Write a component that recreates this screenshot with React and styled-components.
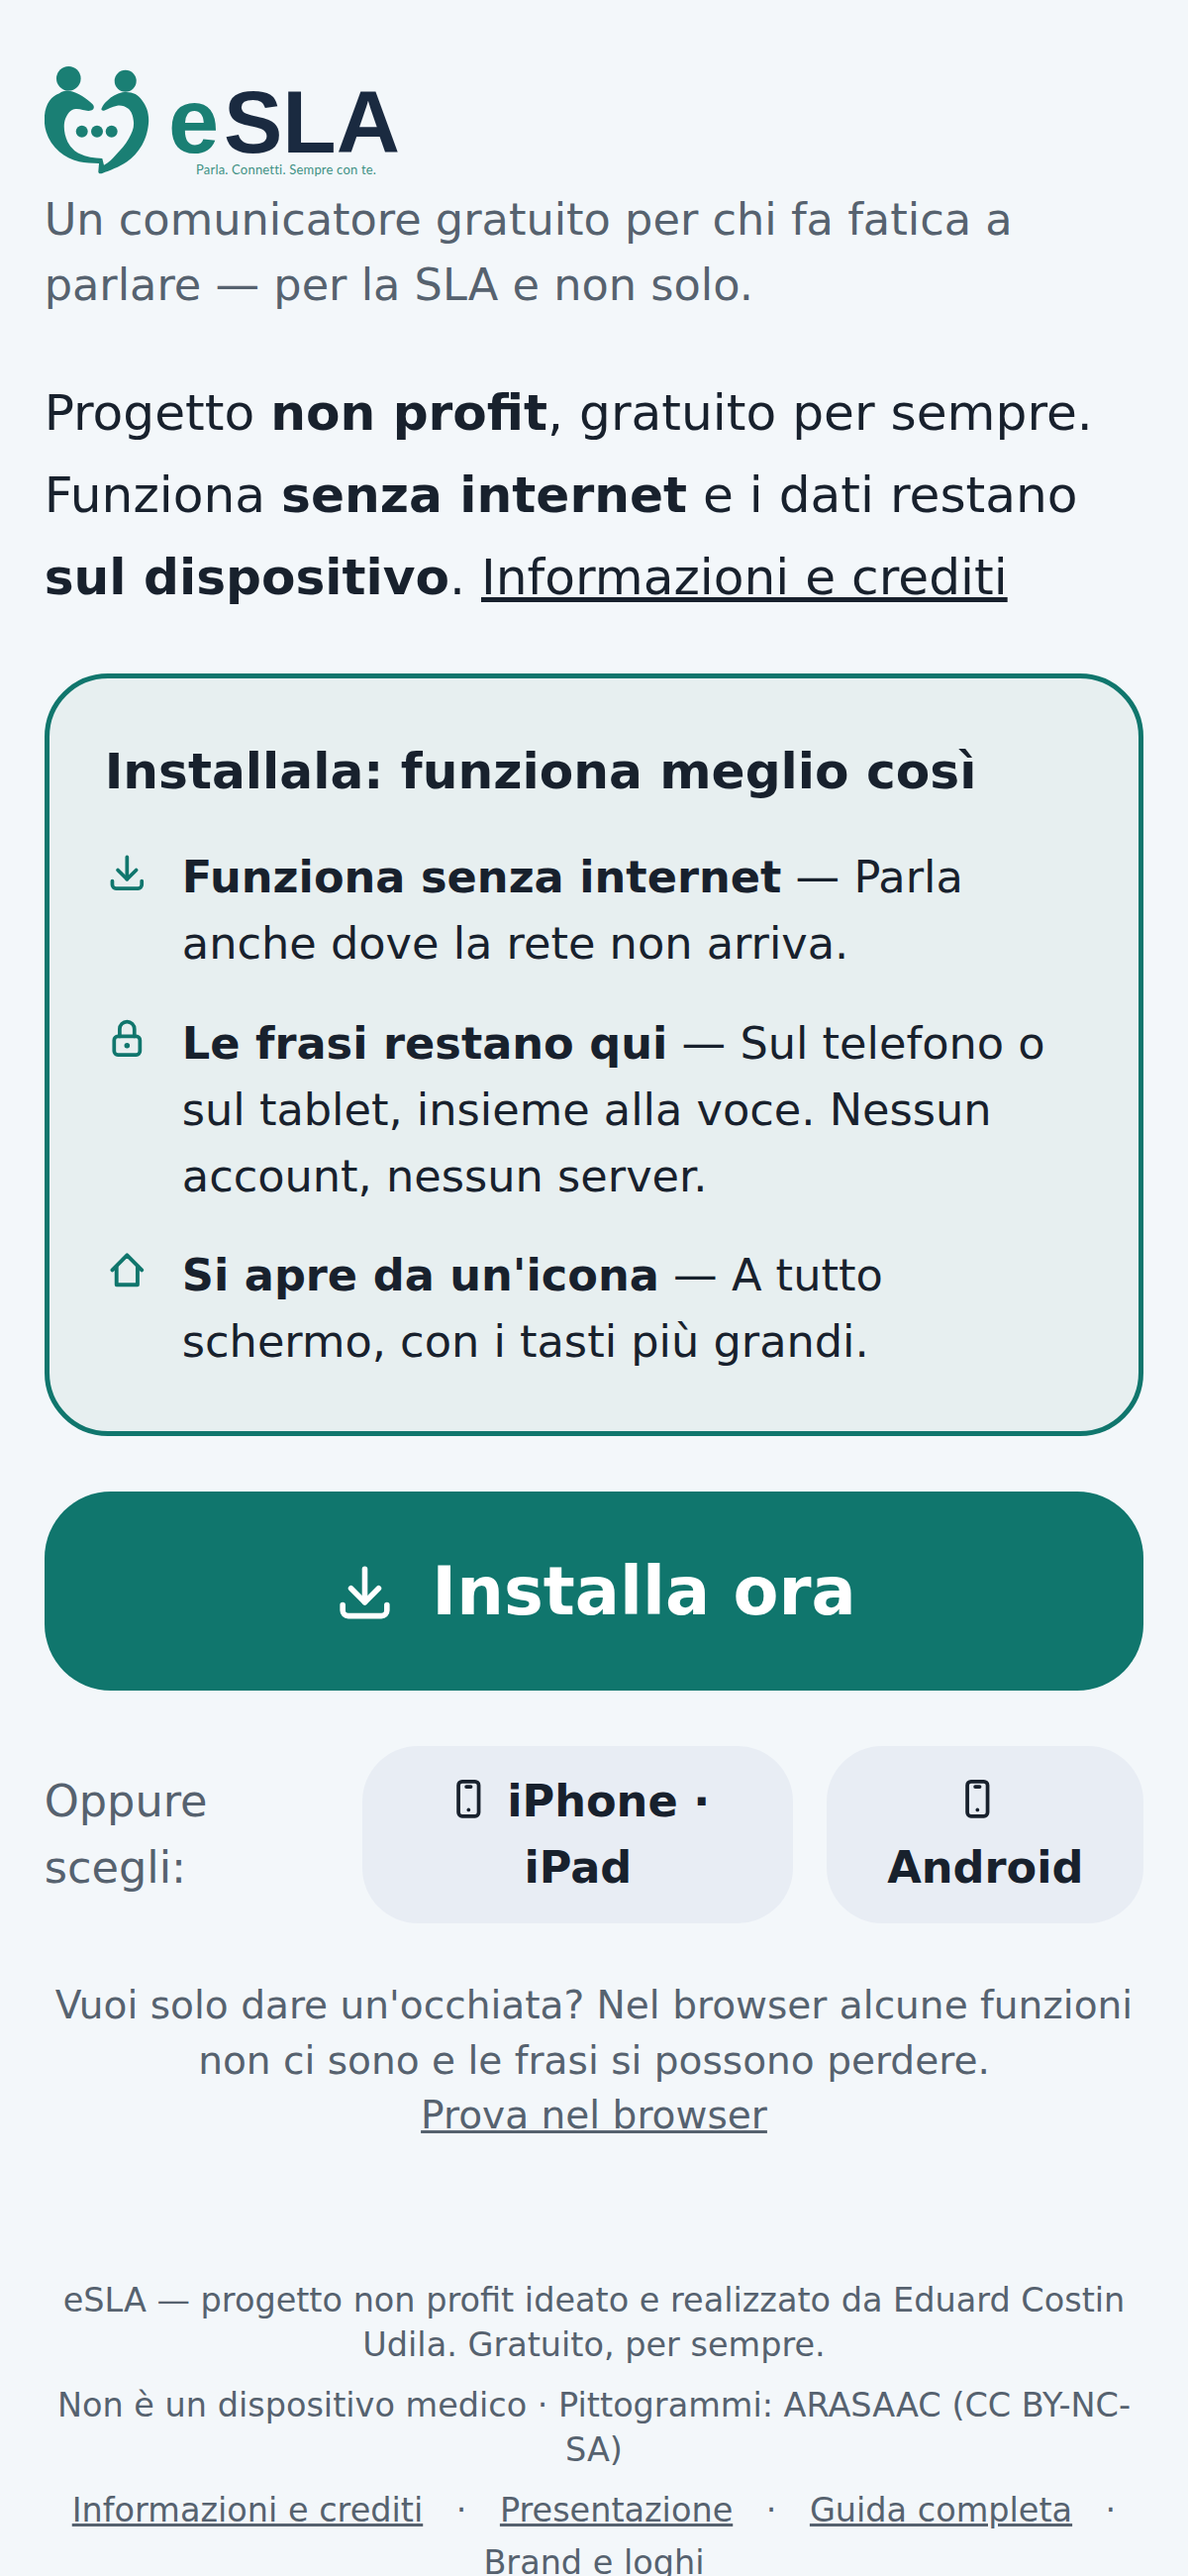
import React from "react";
import styled, { createGlobalStyle } from "styled-components";

const Global = createGlobalStyle`
  html, body {
    margin: 0;
    padding: 0;
    background: #f3f7fa;
    font-family: "DejaVu Sans", sans-serif;
    color: #18212d;
  }
  * { box-sizing: border-box; }
`;

const Page = styled.main`
  height: 2601px;
  overflow: hidden;
  padding: 60px 44.65px 0;
`;

const LogoSvg = styled.svg`
  display: block;
  width: 375px;
  height: 128.5px;
`;

const Subtitle = styled.p`
  margin: 0 0 53px;
  font-size: 44.65px;
  line-height: 66.98px;
  color: #56626f;
`;

const Intro = styled.p`
  margin: 0 0 56px;
  font-size: 50.23px;
  line-height: 83px;
  a { color: inherit; }
`;

const Card = styled.section`
  border: 5.8px solid #10766d;
  border-radius: 64px;
  background: #e7eff0;
  padding: 56px;
`;

const CardTitle = styled.h2`
  margin: 0 0 36px;
  font-size: 50.23px;
  line-height: 76px;
  font-weight: 700;
`;

const Benefits = styled.ul`
  list-style: none;
  margin: 0;
  padding: 0;
  display: flex;
  flex-direction: column;
  gap: 33.5px;
`;

const Benefit = styled.li`
  display: grid;
  grid-template-columns: 44.65px 1fr;
  column-gap: 33.5px;
  font-size: 44.65px;
  line-height: 66.98px;
  svg {
    width: 44.65px;
    height: 44.65px;
    color: #10766d;
    margin-top: 5px;
  }
`;

const Primary = styled.a`
  display: flex;
  align-items: center;
  justify-content: center;
  gap: 34px;
  height: 201px;
  margin-top: 56px;
  border-radius: 67px;
  background: #10766d;
  color: #fff;
  font-size: 66.98px;
  font-weight: 700;
  svg {
    width: 67px;
    height: 67px;
  }
`;

const Choices = styled.div`
  display: flex;
  align-items: center;
  gap: 34px;
  margin-top: 56px;
`;

const ChoiceLabel = styled.span`
  flex: 1;
  font-size: 44.65px;
  line-height: 66.98px;
  color: #56626f;
`;

const Choice = styled.a`
  width: ${(p) => p.$w}px;
  padding: 22.3px 39px;
  text-align: center;
  border-radius: 56px;
  background: #e8edf4;
  font-size: 44.65px;
  line-height: 66.98px;
  font-weight: 700;
  svg {
    width: 44.65px;
    height: 44.65px;
    vertical-align: -5px;
    margin-right: 17px;
  }
`;

const Browser = styled.p`
  margin: 55px 0 0;
  text-align: center;
  font-size: 39.07px;
  line-height: 55.6px;
  color: #56626f;
  a { color: inherit; }
`;

const Footer = styled.footer`
  margin-top: 136px;
  text-align: center;
  font-size: 33.49px;
  line-height: 45px;
  color: #56626f;
  p { margin: 0 0 16px; }
`;

const FooterLinks = styled.nav`
  display: flex;
  flex-wrap: wrap;
  justify-content: center;
  gap: 8px 33.5px;
  a {
    color: inherit;
    white-space: nowrap;
  }
`;

const Download = () => (
  <svg viewBox="0 0 24 24" fill="none" stroke="currentColor" strokeWidth="2" strokeLinecap="round" strokeLinejoin="round">
    <path d="M4 17v2a2 2 0 0 0 2 2h12a2 2 0 0 0 2-2v-2" />
    <path d="M7 11l5 5 5-5" />
    <path d="M12 4v12" />
  </svg>
);

const Lock = () => (
  <svg viewBox="0 0 24 24" fill="none" stroke="currentColor" strokeWidth="2" strokeLinecap="round" strokeLinejoin="round">
    <path d="M5 13a2 2 0 0 1 2-2h10a2 2 0 0 1 2 2v6a2 2 0 0 1-2 2H7a2 2 0 0 1-2-2z" />
    <path d="M11.5 16a.5.5 0 1 0 1 0 .5.5 0 0 0-1 0" />
    <path d="M8 11V7a4 4 0 1 1 8 0v4" />
  </svg>
);

const Home = () => (
  <svg viewBox="0 0 24 24" fill="none" stroke="currentColor" strokeWidth="2.1" strokeLinecap="round" strokeLinejoin="round">
    <path d="M4 12l8-8 8 8" />
    <path d="M6.3 10v10h11.4V10" />
  </svg>
);

const Phone = () => (
  <svg viewBox="0 0 24 24" fill="none" stroke="currentColor" strokeWidth="2" strokeLinecap="round" strokeLinejoin="round">
    <path d="M6.5 4.6a2 2 0 0 1 2-2h7a2 2 0 0 1 2 2v14.8a2 2 0 0 1-2 2h-7a2 2 0 0 1-2-2z" />
    <path d="M10.8 5.4h2.4" />
    <path d="M12 18v.01" />
  </svg>
);

const Logo = () => (
  <LogoSvg viewBox="0 0 375 128.5" role="img" aria-label="eSLA">
    <g fill="#1a7f74">
      <circle cx="24.3" cy="19.3" r="12.3" />
      <circle cx="81.7" cy="21.7" r="11" />
      <circle cx="37.7" cy="72.7" r="6" />
      <circle cx="53" cy="72.7" r="6" />
      <circle cx="67.7" cy="72.7" r="6" />
      <path d="M15 34.3C18 32 22 31 25 31.7C34 33 43 40 48.3 45C50.5 47 50.5 50.5 47 51.5C42 53 37 49.5 31.7 50C26 50.5 23 55 21 60C18.5 67 20 76 23.3 83.3C27 90 31 93 35 95C42 98.5 50 99.5 58.3 100L60 106.7C65 104 69 100 71.7 96.7C77 91 82 86 85 80C88.5 74 90.5 69 90 63.3C89.5 57 88 53 85 50C81 47 77 46 73.3 46.7C68 47.5 64 50.5 60 51.7C57.5 52 57 50.5 57.7 49.3C59 46 61 43.5 63.3 41.7C68 37 73 34.5 78.3 33.3C83 32.5 88 33 91.7 35C97 38 101 44 103.3 50C105 55 105.5 60 105 65C104 74 102 80 98.3 86.7C94 94 89 99 83.3 103.3C75 109 66 112 58.3 115C56.5 115.7 54.5 115.5 54.3 113.5L55 105C48 105 41 104.5 35 103.3C27 101 20.5 98 15 93.3C8.5 87.5 4 81 1.7 73.3C0 68 -0.5 62 0 56.7C0.5 51 2 46 5 41.7C7.5 38 11 36 15 34.3Z" />
    </g>
    <text x="125" y="94" fontFamily="Liberation Sans" fontWeight="700" fontSize="92" fill="#1a7f74">e</text>
    <text x="181" y="94" fontFamily="Liberation Sans" fontWeight="700" fontSize="89" fill="#1a2a40">SLA</text>
    <text x="153" y="116" fontFamily="Lato" fontSize="13" letterSpacing="0.2" fill="#3f9184">Parla. Connetti. Sempre con te.</text>
  </LogoSvg>
);

export default function App() {
  return (
    <Page>
      <Global />
      <Logo />
      <Subtitle>Un comunicatore gratuito per chi fa fatica a parlare — per la SLA e non solo.</Subtitle>
      <Intro>
        Progetto <strong>non profit</strong>, gratuito per sempre. Funziona <strong>senza internet</strong> e i dati
        restano <strong>sul dispositivo</strong>. <a href="#info">Informazioni e crediti</a>
      </Intro>
      <Card>
        <CardTitle>Installala: funziona meglio così</CardTitle>
        <Benefits>
          <Benefit>
            <Download />
            <span><strong>Funziona senza internet</strong> — Parla anche dove la rete non arriva.</span>
          </Benefit>
          <Benefit>
            <Lock />
            <span><strong>Le frasi restano qui</strong> — Sul telefono o sul tablet, insieme alla voce. Nessun account, nessun server.</span>
          </Benefit>
          <Benefit>
            <Home />
            <span><strong>Si apre da un'icona</strong> — A tutto schermo, con i tasti più grandi.</span>
          </Benefit>
        </Benefits>
      </Card>
      <Primary><Download />Installa ora</Primary>
      <Choices>
        <ChoiceLabel>Oppure scegli:</ChoiceLabel>
        <Choice $w={435}><Phone />iPhone · iPad</Choice>
        <Choice $w={320}><Phone />Android</Choice>
      </Choices>
      <Browser>
        Vuoi solo dare un'occhiata? Nel browser alcune funzioni non ci sono e le frasi si possono perdere.<br />
        <a href="#web">Prova nel browser</a>
      </Browser>
      <Footer>
        <p>eSLA — progetto non profit ideato e realizzato da Eduard Costin Udila. Gratuito, per sempre.</p>
        <p>Non è un dispositivo medico · Pittogrammi: ARASAAC (CC BY-NC-SA)</p>
        <FooterLinks>
          <a href="#info">Informazioni e crediti</a>
          <span>·</span>
          <a href="#pres">Presentazione</a>
          <span>·</span>
          <a href="#guida">Guida completa</a>
          <span>·</span>
          <a href="#brand">Brand e loghi</a>
        </FooterLinks>
      </Footer>
    </Page>
  );
}
